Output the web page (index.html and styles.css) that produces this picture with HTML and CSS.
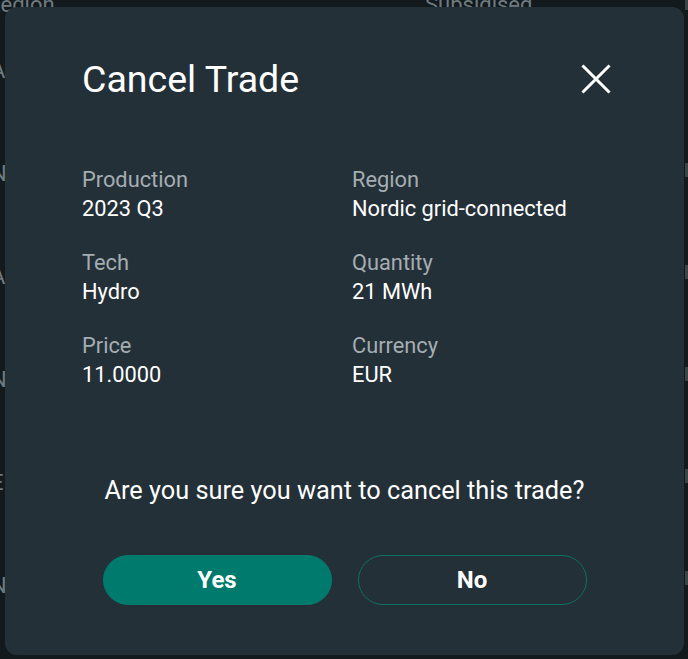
FILE: index.html
```html
<!DOCTYPE html>
<html lang="en">
<head>
<meta charset="utf-8">
<title>Cancel Trade</title>
<link rel="stylesheet" href="styles.css">
</head>
<body>
<div class="page">
  <div class="bg-table">
    <div class="bg-head">
      <span class="bg-col1">Region</span>
      <span class="bg-col2">Subsidised</span>
    </div>
    <div class="bg-row"><span>A</span></div>
    <div class="bg-row"><span>N</span></div>
    <div class="bg-row"><span>A</span></div>
    <div class="bg-row"><span>N</span></div>
    <div class="bg-row"><span>E</span></div>
    <div class="bg-row"><span>N</span></div>
  </div>
  <div class="edge-marks">
    <i></i><i></i><i></i><i></i><i></i><i></i>
  </div>

  <div class="modal" role="dialog" aria-labelledby="title">
    <div class="modal-head">
      <h1 id="title" class="modal-title">Cancel Trade</h1>
      <button class="close" aria-label="Close">
        <svg width="36" height="36" viewBox="0 0 36 36"><path d="M5.5 5.5L30.5 30.5M30.5 5.5L5.5 30.5" stroke="#ffffff" stroke-width="3" stroke-linecap="square" fill="none"/></svg>
      </button>
    </div>
    <dl class="details">
      <div class="item"><dt>Production</dt><dd>2023 Q3</dd></div>
      <div class="item"><dt>Region</dt><dd>Nordic grid-connected</dd></div>
      <div class="item"><dt>Tech</dt><dd>Hydro</dd></div>
      <div class="item"><dt>Quantity</dt><dd>21 MWh</dd></div>
      <div class="item"><dt>Price</dt><dd>11.0000</dd></div>
      <div class="item"><dt>Currency</dt><dd>EUR</dd></div>
    </dl>
    <p class="question">Are you sure you want to cancel this trade?</p>
    <div class="actions">
      <button class="btn btn-yes">Yes</button>
      <button class="btn btn-no">No</button>
    </div>
  </div>
</div>
</body>
</html>
```
FILE: styles.css
```css
* { box-sizing: border-box; }
html, body {
  margin: 0;
  padding: 0;
  width: 688px;
  height: 659px;
  overflow: hidden;
  background: #131a1e;
  font-family: Roboto, "Noto Sans", "Liberation Sans", sans-serif;
}
.page {
  position: relative;
  width: 688px;
  height: 659px;
  overflow: hidden;
}
.bg-table {
  margin-left: -13px;
  color: #6f7a80;
  font-size: 22px;
}
.bg-head {
  display: flex;
  height: 28px;
  margin-top: -9px;
  line-height: 28px;
}
.bg-col1 { width: 438px; }
.bg-row {
  height: 103px;
  line-height: 30px;
  display: flex;
  align-items: center;
  padding-left: 4px;
}
.bg-row:first-of-type { margin-top: 9px; }
.edge-marks {
  position: absolute;
  right: 0;
  top: 0;
  width: 4px;
  height: 659px;
}
.edge-marks i {
  display: block;
  width: 3px;
  margin-left: 1px;
  height: 14px;
  background: #3a4449;
  margin-top: 88px;
}
.edge-marks i:first-child { margin-top: 0; height: 10px; }
.edge-marks i:nth-child(2) { margin-top: 153px; }

.modal {
  position: absolute;
  left: 5px;
  top: 7px;
  width: 679px;
  height: 648px;
  background: #243038;
  border-radius: 12px;
  padding: 52px 77px 0 77px;
  color: #ffffff;
  display: flex;
  flex-direction: column;
}
.modal-head {
  display: flex;
  align-items: center;
  justify-content: space-between;
  height: 40px;
}
.modal-title {
  margin: 0;
  font-size: 37.5px;
  font-weight: 400;
  line-height: 40px;
}
.close {
  background: none;
  border: 0;
  padding: 0;
  margin-right: -7px;
  width: 36px;
  height: 36px;
  display: flex;
}
.details {
  margin: 66px 0 0;
  display: grid;
  grid-template-columns: 270px 1fr;
  row-gap: 25px;
}
.item { margin: 0; }
.item dt {
  color: #a4adb2;
  font-size: 21.8px;
  line-height: 29px;
}
.item dd {
  margin: 0;
  color: #ffffff;
  font-size: 21.8px;
  line-height: 29px;
}
.question {
  margin: 86px 0 0;
  text-align: center;
  font-size: 25.3px;
  line-height: 32px;
  color: #ffffff;
}
.actions {
  margin-top: 48px;
  display: flex;
  justify-content: center;
  gap: 26px;
}
.btn {
  width: 229px;
  height: 50px;
  border-radius: 25px;
  font-family: Roboto, "Noto Sans", sans-serif;
  font-size: 24px;
  font-weight: 700;
  color: #ffffff;
  cursor: pointer;
}
.btn-yes {
  background: #007a6c;
  border: 1px solid #007a6c;
}
.btn-no {
  background: transparent;
  border: 1.5px solid #0c7064;
}
```
